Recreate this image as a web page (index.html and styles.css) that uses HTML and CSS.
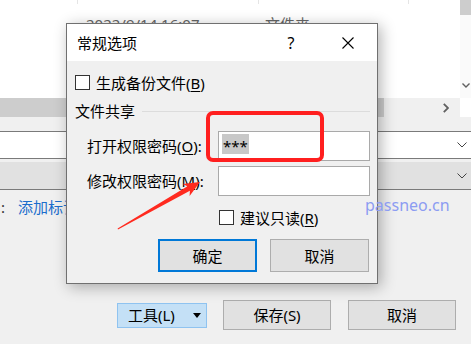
FILE: index.html
```html
<!DOCTYPE html>
<html lang="zh-CN">
<head>
  <meta charset="UTF-8">
  <title>常规选项</title>
  <link rel="stylesheet" href="styles.css">
</head>
<body>
  <div class="screen">
    <div class="list">
      <div class="list-main">
        <div class="list-head">
          <span class="col c1"></span><span class="col c2"></span><span class="col c3"></span>
        </div>
        <div class="list-row">
          <span class="date">2022/9/14 16:07</span>
          <span class="type">文件夹</span>
        </div>
      </div>
      <div class="vscroll">
        <div class="vthumb"></div>
        <svg class="varrow" width="8" height="5" viewBox="0 0 8 5"><polyline points="0.5,0.5 4,4 7.5,0.5" fill="none" stroke="#606060" stroke-width="1.4"/></svg>
      </div>
    </div>
    <div class="hscroll">
      <div class="hthumb"></div>
      <div class="htrack">
        <svg width="6" height="10" viewBox="0 0 6 10"><polyline points="0.8,0.8 5,5 0.8,9.2" fill="none" stroke="#606060" stroke-width="1.8"/></svg>
      </div>
      <div class="hcorner"></div>
    </div>
    <div class="field">
      <svg width="10" height="6" viewBox="0 0 10 6"><polyline points="0.5,0.5 5,5 9.5,0.5" fill="none" stroke="#444" stroke-width="1"/></svg>
    </div>
    <div class="combo">
      <svg width="10" height="6" viewBox="0 0 10 6"><polyline points="0.5,0.5 5,5 9.5,0.5" fill="none" stroke="#444" stroke-width="1"/></svg>
    </div>
    <div class="tags"><span class="colon">:</span><span class="tag-link">添加标记</span></div>
    <div class="actions">
      <div class="tool-btn"><span>工具(L)</span><span class="caret"></span></div>
      <div class="btn save">保存(S)</div>
      <div class="btn cancel">取消</div>
    </div>
  </div>

  <div class="dialog">
    <div class="titlebar">
      <span class="title">常规选项</span>
      <span class="help">?</span>
      <span class="close">
        <svg width="12" height="12" viewBox="0 0 12 12"><path d="M0.5 0.5 L11.5 11.5 M11.5 0.5 L0.5 11.5" stroke="#000" stroke-width="1.1"/></svg>
      </span>
    </div>
    <div class="dlg-body">
      <div class="check-row">
        <span class="checkbox"></span>
        <span>生成备份文件(<u>B</u>)</span>
      </div>
      <div class="group-title">
        <span>文件共享</span>
        <span class="group-line"></span>
      </div>
      <div class="pw-grid">
        <span class="pw-label">打开权限密码(<u>O</u>):</span>
        <div class="input"><span class="selected">***</span></div>
        <span class="pw-label">修改权限密码(<u>M</u>):</span>
        <div class="input"></div>
      </div>
      <div class="check-row readonly">
        <span class="checkbox"></span>
        <span>建议只读(<u>R</u>)</span>
      </div>
      <div class="dlg-buttons">
        <div class="btn primary">确定</div>
        <div class="btn">取消</div>
      </div>
    </div>
  </div>

  <div class="mark-box"></div>
  <svg class="mark-arrow" width="95" height="60" viewBox="0 0 95 60">
    <polygon points="8,54.6 79.9,15.7 79.6,21.1 90,7 72.6,8.9 77.5,11.3 7.6,53.4" fill="#ff2a1f"/>
  </svg>
  <div class="watermark">passneo.cn</div>
</body>
</html>
```

FILE: styles.css
```css
* {
  box-sizing: border-box;
}
body {
  margin: 0;
  width: 471px;
  height: 344px;
  overflow: hidden;
  position: relative;
  background: #f0f0f0;
  font-family: "Noto Sans", "Noto Sans CJK SC", sans-serif;
  font-size: 15px;
  line-height: 20px;
  color: #000;
}
u {
  text-underline-offset: 2px;
}

/* background window */
.list {
  display: flex;
  height: 98px;
  background: #fff;
}
.list-main {
  flex: 1;
}
.list-head {
  display: flex;
  height: 4px;
}
.col {
  border-right: 1px solid #e5e5e5;
}
.c1 { width: 78px; }
.c2 { width: 181px; }
.c3 { width: 150px; }
.list-row {
  display: flex;
  padding-top: 10px;
  color: #666;
}
.date {
  margin-left: 86px;
  width: 179px;
}
.vscroll {
  width: 11px;
  background: #fafafa;
  display: flex;
  flex-direction: column;
  align-items: center;
}
.vthumb {
  width: 11px;
  height: 15px;
  background: #cdcdcd;
}
.varrow {
  margin-top: 68px;
}
.hscroll {
  display: flex;
  height: 19px;
}
.hthumb {
  width: 384px;
  background: #cdcdcd;
}
.htrack {
  flex: 1;
  background: #f0f0f0;
  display: flex;
  align-items: center;
  justify-content: flex-end;
  padding-right: 11px;
}
.hcorner {
  width: 11px;
  background: #fff;
}
.field {
  margin-top: 14px;
  height: 28px;
  background: #fff;
  border-top: 1px solid #7a7a7a;
  border-bottom: 1px solid #7a7a7a;
  display: flex;
  align-items: center;
  justify-content: flex-end;
  padding-right: 4px;
}
.combo {
  margin-top: 3px;
  height: 28px;
  background: #e1e1e1;
  border-bottom: 1px solid #7a7a7a;
  display: flex;
  align-items: center;
  justify-content: flex-end;
  padding-right: 4px;
}
.tags {
  margin-top: 7px;
  display: flex;
}
.colon {
  width: 18px;
  padding-left: 1px;
  color: #333;
}
.tag-link {
  color: #1a6dcc;
}
.actions {
  margin-top: 83px;
  height: 30px;
  display: flex;
  align-items: center;
}
.tool-btn {
  margin-left: 117px;
  width: 90px;
  height: 25px;
  background: #c4e0f6;
  border: 1px solid #8fc3f0;
  display: flex;
  align-items: center;
  padding-left: 10px;
}
.caret {
  margin-left: auto;
  margin-right: 5px;
  width: 0;
  height: 0;
  border-left: 4px solid transparent;
  border-right: 4px solid transparent;
  border-top: 5px solid #000;
}
.btn {
  display: flex;
  align-items: center;
  justify-content: center;
  background: #e1e1e1;
  border: 1px solid #adadad;
}
.save {
  margin-left: 16px;
  width: 108px;
  height: 30px;
}
.cancel {
  margin-left: 17px;
  width: 108px;
  height: 30px;
}

/* dialog */
.dialog {
  position: absolute;
  left: 66px;
  top: 23px;
  width: 312px;
  height: 261px;
  background: #f0f0f0;
  border: 1px solid #707070;
  box-shadow: 3px 3px 14px rgba(0, 0, 0, 0.3);
}
.titlebar {
  height: 37px;
  background: #fff;
  display: flex;
  align-items: center;
  padding-left: 10px;
  padding-right: 6px;
}
.title {
  flex: 1;
}
.help {
  width: 46px;
  text-align: center;
  font-size: 16px;
}
.close {
  width: 46px;
  margin-left: 11px;
  display: flex;
  justify-content: center;
}
.dlg-body {
  padding: 14px 7px 0 8px;
}
.check-row {
  display: flex;
  align-items: center;
  gap: 6px;
  height: 15px;
}
.checkbox {
  width: 15px;
  height: 15px;
  background: #fff;
  border: 1px solid #333;
}
.group-title {
  margin-top: 11px;
  height: 20px;
  display: flex;
  align-items: center;
}
.group-line {
  flex: 1;
  margin-left: 7px;
  height: 1px;
  background: #dcdcdc;
}
.pw-grid {
  margin-top: 10px;
  padding-left: 12px;
  display: grid;
  grid-template-columns: 131px 152px;
  row-gap: 5px;
  align-items: center;
}
.input {
  height: 30px;
  background: #fff;
  border: 1px solid #a9a9a9;
  padding: 2px 3px;
  display: flex;
}
.selected {
  background: #c8c8c8;
  padding: 0 1px;
  line-height: 24px;
  height: 20px;
}
.readonly {
  margin-top: 14px;
  margin-left: 144px;
}
.dlg-buttons {
  margin-top: 14px;
  padding-right: 1px;
  display: flex;
  justify-content: flex-end;
  gap: 13px;
}
.dlg-buttons .btn {
  width: 99px;
  height: 33px;
}
.btn.primary {
  border: 2px solid #0078d7;
}

/* annotations over the screenshot */
.mark-box {
  position: absolute;
  left: 206px;
  top: 111px;
  width: 118px;
  height: 51px;
  border: 4px solid #ff1f1f;
  border-radius: 7px;
}
.mark-arrow {
  position: absolute;
  left: 110px;
  top: 175px;
}
.watermark {
  position: absolute;
  left: 365px;
  top: 195px;
  font-family: "Noto Sans", sans-serif;
  font-size: 16px;
  color: #8c9cf2;
}
```
